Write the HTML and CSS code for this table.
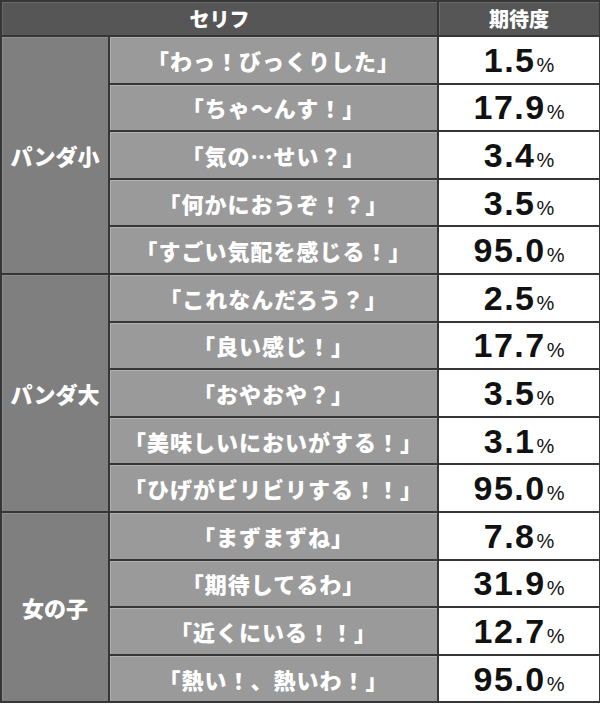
FILE: index.html
```html
<!DOCTYPE html>
<html lang="ja">
<head>
<meta charset="utf-8">
<link rel="stylesheet" href="styles.css">
</head>
<body>
<table class="tbl">
  <colgroup>
    <col class="c-grp">
    <col class="c-line">
    <col class="c-rate">
  </colgroup>
  <thead>
    <tr class="head">
      <th class="h-line" colspan="2">セリフ</th>
      <th class="h-rate">期待度</th>
    </tr>
  </thead>
  <tbody>
    <tr>
      <td class="grp" rowspan="5">パンダ小</td>
      <td class="line">「わっ！びっくりした」</td>
      <td class="rate">1.5<span class="pc">%</span></td>
    </tr>
    <tr><td class="line">「ちゃ～んす！」</td><td class="rate">17.9<span class="pc">%</span></td></tr>
    <tr><td class="line">「気の…せい？」</td><td class="rate">3.4<span class="pc">%</span></td></tr>
    <tr><td class="line">「何かにおうぞ！？」</td><td class="rate">3.5<span class="pc">%</span></td></tr>
    <tr><td class="line">「すごい気配を感じる！」</td><td class="rate">95.0<span class="pc">%</span></td></tr>
    <tr>
      <td class="grp" rowspan="5">パンダ大</td>
      <td class="line">「これなんだろう？」</td>
      <td class="rate">2.5<span class="pc">%</span></td>
    </tr>
    <tr><td class="line">「良い感じ！」</td><td class="rate">17.7<span class="pc">%</span></td></tr>
    <tr><td class="line">「おやおや？」</td><td class="rate">3.5<span class="pc">%</span></td></tr>
    <tr><td class="line">「美味しいにおいがする！」</td><td class="rate">3.1<span class="pc">%</span></td></tr>
    <tr><td class="line">「ひげがビリビリする！！」</td><td class="rate">95.0<span class="pc">%</span></td></tr>
    <tr>
      <td class="grp" rowspan="4">女の子</td>
      <td class="line">「まずまずね」</td>
      <td class="rate">7.8<span class="pc">%</span></td>
    </tr>
    <tr><td class="line">「期待してるわ」</td><td class="rate">31.9<span class="pc">%</span></td></tr>
    <tr><td class="line">「近くにいる！！」</td><td class="rate">12.7<span class="pc">%</span></td></tr>
    <tr><td class="line">「熱い！、熱いわ！」</td><td class="rate">95.0<span class="pc">%</span></td></tr>
  </tbody>
</table>
</body>
</html>
```

FILE: styles.css
```css
html, body {
  margin: 0;
  padding: 0;
  background: #ffffff;
}

.tbl {
  width: 599px;
  border-collapse: collapse;
  table-layout: fixed;
  font-family: "Noto Sans CJK JP", "Noto Sans", sans-serif;
  font-weight: 900;
}

.c-grp { width: 108px; }
.c-line { width: 329px; }
.c-rate { width: 162px; }

.tbl th,
.tbl td {
  border: 2px solid #363636;
  padding: 0;
  text-align: center;
  vertical-align: middle;
}

.head th {
  height: 33px;
  background: #565656;
  color: #ffffff;
  font-size: 20px;
  font-weight: 900;
  line-height: 1;
  box-shadow: inset 1px 1px 0 #6a6a6a;
}

.tbl tbody tr {
  height: 47.6px;
}

.grp {
  background: #7f7f7f;
  color: #ffffff;
  font-size: 22px;
  box-shadow: inset 1px 1px 0 #8f8f8f;
}

.line {
  background: #9a9a9a;
  color: #ffffff;
  font-size: 22px;
  letter-spacing: 1px;
  white-space: nowrap;
  line-height: 1;
  box-shadow: inset 1px 1px 0 #b0b0b0;
}

.rate {
  background: #ffffff;
  color: #111111;
  text-align: right;
  padding-right: 30px;
  font-family: "Liberation Sans", Arial, sans-serif;
  font-weight: 700;
  font-size: 34px;
  line-height: 1;
  letter-spacing: 1.5px;
  padding-top: 5px;
}

.pc {
  font-size: 20px;
  font-weight: 400;
  letter-spacing: 0;
  margin-left: 1px;
}
```
